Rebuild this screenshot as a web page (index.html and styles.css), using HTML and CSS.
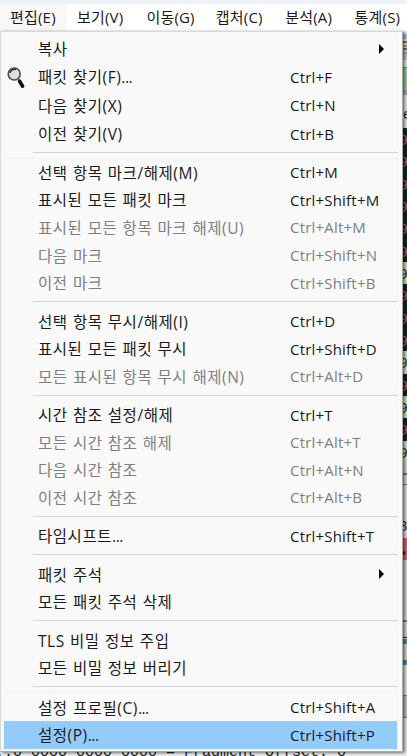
FILE: index.html
```html
<!DOCTYPE html>
<html lang="ko">
<head>
    <meta charset="UTF-8">
    <meta name="viewport" content="width=device-width, initial-scale=1.0">
    <title>Wireshark</title>
    <link rel="stylesheet" href="styles.css">
</head>
<body>
    <nav class="menubar">
        <span class="active">편집(E)</span>
        <span>보기(V)</span>
        <span>이동(G)</span>
        <span>캡처(C)</span>
        <span>분석(A)</span>
        <span>통계(S)</span>
    </nav>

    <!-- main window behind the menu -->
    <main class="window">
        <div class="toolbar"></div>
        <div class="filter"></div>
        <div class="columns">e</div>
        <div class="packets">
            <div class="packet">9</div>
            <div class="packet">9</div>
            <div class="packet">9</div>
            <div class="packet">9</div>
            <div class="packet">9</div>
            <div class="packet">9</div>
            <div class="packet http">9</div>
            <div class="packet">9</div>
            <div class="packet">9</div>
            <div class="packet">9</div>
            <div class="packet http">9</div>
            <div class="packet">9</div>
            <div class="packet http">9</div>
            <div class="packet">9</div>
            <div class="packet http">9</div>
        </div>
        <div class="splitter"></div>
        <div class="details">3</div>
        <div class="error">,</div>
        <div class="tree"></div>
        <div class="scrollbar"></div>
        <div class="offset">..0 0000 0000 0000 = Fragment Offset: 0</div>
    </main>

    <div class="menu">
        <div class="group first">
            <div class="item"><span class="label">복사</span><i class="arrow"></i></div>
            <div class="item">
                <svg class="icon" viewBox="0 0 20 24">
                    <circle cx="7.2" cy="8" r="6" fill="#dedede" stroke="#4a4a4a" stroke-width="1.6"/>
                    <path d="M3 7C4 4 6 3 9 3.5" fill="none" stroke="#222" stroke-width="1.2"/>
                    <path d="M10.8 13l1.7 2.2" stroke="#777" stroke-width="2"/>
                    <path d="M12.6 15.2l3 5" stroke="#111" stroke-width="3.6" stroke-linecap="round"/>
                </svg>
                <span class="label">패킷 찾기(F)<span class="dots">...</span></span><span class="key">Ctrl+F</span>
            </div>
            <div class="item"><span class="label">다음 찾기(X)</span><span class="key">Ctrl+N</span></div>
            <div class="item"><span class="label">이전 찾기(V)</span><span class="key">Ctrl+B</span></div>
        </div>
        <div class="separator"></div>
        <div class="group seam">
            <div class="item"><span class="label">선택 항목 마크/해제(M)</span><span class="key">Ctrl+M</span></div>
            <div class="item"><span class="label">표시된 모든 패킷 마크</span><span class="key">Ctrl+Shift+M</span></div>
            <div class="item disabled"><span class="label">표시된 모든 항목 마크 해제(U)</span><span class="key">Ctrl+Alt+M</span></div>
            <div class="item disabled"><span class="label">다음 마크</span><span class="key">Ctrl+Shift+N</span></div>
            <div class="item disabled"><span class="label">이전 마크</span><span class="key">Ctrl+Shift+B</span></div>
        </div>
        <div class="separator"></div>
        <div class="group">
            <div class="item"><span class="label">선택 항목 무시/해제(I)</span><span class="key">Ctrl+D</span></div>
            <div class="item"><span class="label">표시된 모든 패킷 무시</span><span class="key">Ctrl+Shift+D</span></div>
            <div class="item disabled"><span class="label">모든 표시된 항목 무시 해제(N)</span><span class="key">Ctrl+Alt+D</span></div>
        </div>
        <div class="separator"></div>
        <div class="group">
            <div class="item"><span class="label">시간 참조 설정/해제</span><span class="key">Ctrl+T</span></div>
            <div class="item disabled"><span class="label">모든 시간 참조 해제</span><span class="key">Ctrl+Alt+T</span></div>
            <div class="item disabled"><span class="label">다음 시간 참조</span><span class="key">Ctrl+Alt+N</span></div>
            <div class="item disabled"><span class="label">이전 시간 참조</span><span class="key">Ctrl+Alt+B</span></div>
        </div>
        <div class="separator"></div>
        <div class="group">
            <div class="item"><span class="label">타임시프트<span class="dots">...</span></span><span class="key">Ctrl+Shift+T</span></div>
        </div>
        <div class="separator"></div>
        <div class="group">
            <div class="item"><span class="label">패킷 주석</span><i class="arrow"></i></div>
            <div class="item"><span class="label">모든 패킷 주석 삭제</span></div>
        </div>
        <div class="separator"></div>
        <div class="group">
            <div class="item"><span class="label">TLS 비밀 정보 주입</span></div>
            <div class="item"><span class="label">모든 비밀 정보 버리기</span></div>
        </div>
        <div class="separator"></div>
        <div class="group seam last">
            <div class="item"><span class="label">설정 프로필(C)<span class="dots">...</span></span><span class="key">Ctrl+Shift+A</span></div>
            <div class="item selected"><span class="label">설정(P)<span class="dots">...</span></span><span class="key">Ctrl+Shift+P</span></div>
        </div>
    </div>
</body>
</html>
```

FILE: styles.css
```css
* {
    box-sizing: border-box;
}
body {
    margin: 0;
    height: 756px;
    overflow: hidden;
    position: relative;
    font-family: "Open Sans", "Noto Sans CJK KR", sans-serif;
    font-size: 15px;
    color: #1a1a1a;
    background-color: #f0f0f0;
}

/* menu bar */
.menubar {
    display: flex;
    height: 31px;
    border-top: 4px solid #ebf2f9;
    background-color: #fff;
    font-size: 15px;
    line-height: 26px;
    white-space: nowrap;
}
.menubar span {
    flex: 0 0 69.4px;
    padding-left: 10px;
    letter-spacing: 0.2px;
}
.menubar .active {
    flex-basis: 67px;
    background-color: #f8f8f8;
}

/* window behind the menu */
.window {
    height: 725px;
    overflow: hidden;
    line-height: 22px;
}
.toolbar {
    height: 36px;
    margin-left: 402px;
    background: linear-gradient(#eee 0 3px, #9dd0f5 3px 8px, #eee 8px 10px, #c55 10px 12px, #ddd 12px 14px, #8c6 14px 16px, #ddd 16px 17px, #76a 17px 19px, #ddd 19px 21px, #ca5 21px 23px, #ccc 23px 25px, #9dd0f5 25px 29px, #eee 29px);
}
.filter {
    height: 28px;
    margin-left: 402px;
    border-top: 1px solid #888;
    border-bottom: 5px solid #aaa;
    background-color: #8fdc94;
}
.columns {
    height: 33px;
    padding: 7px 0 0 403px;
}
.packet {
    height: 22.33px;
    padding-left: 399px;
    color: #e0645c;
    background-color: #12272e;
}
.packet.http {
    color: #12272e;
    background-color: #d3f2ae;
}
.splitter {
    height: 53px;
    background: linear-gradient(#ddd 0 10px, #777 10px 12px, #ddd 12px 21px, #67707a 21px 22px, #e4e4e4 22px);
}
.details {
    height: 22px;
    padding-left: 399px;
    line-height: 18px;
    background-color: #e6e6e6;
}
.error {
    height: 22px;
    padding-left: 402px;
    font-weight: bold;
    line-height: 18px;
    background-color: #ef5b60;
}
.tree {
    height: 135px;
    background: linear-gradient(#ddd 0 60px, #3d8fb0 60px 62px, #ddd 62px 77px, #222 77px 78px, #eee 78px 79px, #3d8fb0 79px 84px, #ddd 84px 100px, #3d8fb0 100px 105px, #eee 105px);
}
.scrollbar {
    height: 23px;
    border: 1px solid #888;
    border-width: 1px 0;
    background-color: #c6c6c6;
}
.offset {
    height: 39px;
    padding-top: 26px;
    font-family: "Liberation Mono", monospace;
    line-height: 17px;
    white-space: pre;
    text-indent: -5px;
}

/* edit menu */
.menu {
    position: absolute;
    top: 31px;
    left: 0;
    width: 403px;
    height: 721px;
    padding: 3px 4px 0 3px;
    border: 1px solid #d9d9d9;
    border-right-color: #aaa;
    border-bottom-color: #aaa;
    background-color: #f9f9f9;
    box-shadow: 2px 1px 3px rgba(0, 0, 0, 0.55);
}
.group {
    border-right: 1px solid #f1f1f1;
}
.group.seam {
    box-shadow: 0 -1px #f1f1f1;
}
.group.last {
    padding-top: 1px;
}
.item {
    display: flex;
    position: relative;
    align-items: center;
    height: 27.6px;
    padding: 0 0 1px 34px;
    white-space: nowrap;
}
.first .item {
    height: 28.3px;
}
.label {
    width: 252px;
    font-size: 15.5px;
    letter-spacing: 0.55px;
    word-spacing: 0.7px;
}
.dots {
    letter-spacing: -0.5px;
}
.key {
    letter-spacing: 0.2px;
}
.disabled {
    color: #808080;
}
.selected {
    height: 28px;
    background-color: #93cbfa;
}
.icon {
    position: absolute;
    left: 3px;
    top: 3px;
    width: 20px;
    height: 24px;
}
.arrow {
    margin-left: 89px;
    border: 5px solid transparent;
    border-left: 5px solid #000;
    border-right: 0;
}
.separator {
    height: 10.8px;
    padding-top: 4px;
    margin-left: 29px;
}
.separator::before {
    content: "";
    display: block;
    height: 1px;
    background-color: #d4d4d4;
}
```
